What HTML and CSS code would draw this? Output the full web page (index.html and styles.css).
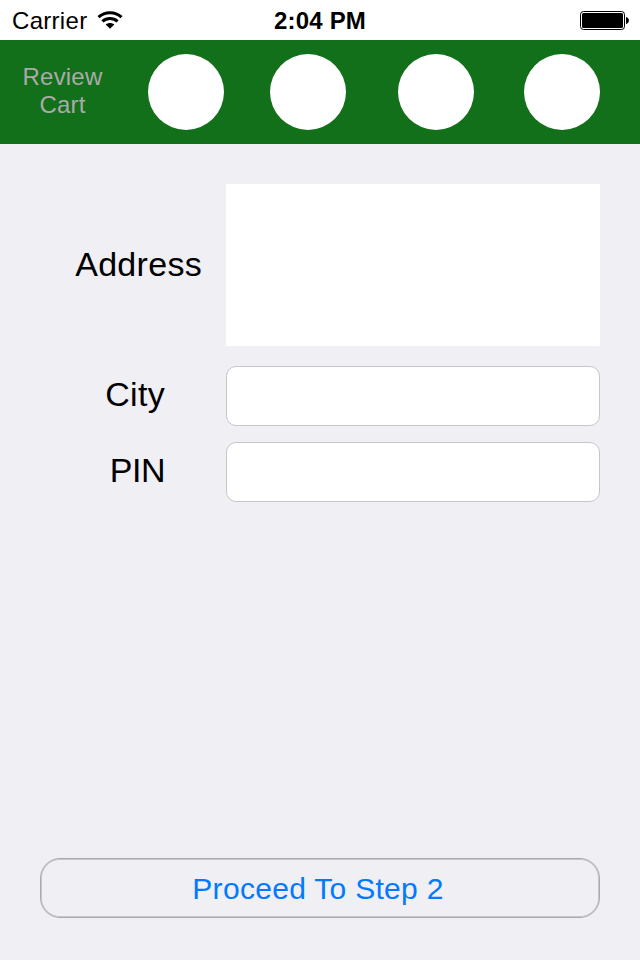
FILE: index.html
```html
<!DOCTYPE html>
<html lang="en">
<head>
<meta charset="utf-8">
<title>Checkout</title>
<link rel="stylesheet" href="styles.css">
</head>
<body>
<header class="status">
  <div class="carrier"><span>Carrier</span>
    <svg class="wifi" width="26" height="18" viewBox="0 0 26 18" fill="none" stroke="#000" stroke-width="3">
      <path d="M1.5 6.2C8 .1 18 .1 24.5 6.2"/>
      <path d="M5.4 10.3C9.7 6.4 16.3 6.4 20.6 10.3"/>
      <path d="M13 17.7L8.7 13.5C11.2 11.5 14.8 11.5 17.3 13.5Z" fill="#000" stroke="none"/>
    </svg>
  </div>
  <time class="clock">2:04 PM</time>
  <svg class="battery" width="49" height="20" viewBox="0 0 49 20">
    <rect x=".5" y=".5" width="44" height="18" rx="3" fill="none" stroke="#000"/>
    <rect x="2" y="2" width="41" height="15" rx="1.5"/>
    <path d="M46 6C49.8 6.8 49.8 12.2 46 13Z"/>
  </svg>
</header>
<nav class="steps">
  <span class="review">Review<br>Cart</span>
  <i class="step"></i><i class="step"></i><i class="step"></i><i class="step"></i>
</nav>
<main class="form">
  <div class="row row-address"><label for="address">Address</label><textarea id="address"></textarea></div>
  <div class="row"><label for="city">City</label><input id="city" type="text"></div>
  <div class="row row-pin"><label for="pin">PIN</label><input id="pin" type="text"></div>
  <button class="proceed" type="button">Proceed To Step 2</button>
</main>
</body>
</html>
```

FILE: styles.css
```css
* { box-sizing: border-box; }
body {
  margin: 0;
  height: 960px;
  display: flex;
  flex-direction: column;
  background: #efeff4;
  color: #000;
  font-family: "Liberation Sans", Arial, sans-serif;
}
.status {
  height: 40px;
  display: grid;
  grid-template-columns: 1fr auto 1fr;
  align-items: center;
  padding: 1px 11px 0;
  background: #fff;
  font-size: 24px;
  line-height: 39px;
  letter-spacing: 0.3px;
}
.carrier { display: flex; align-items: center; gap: 10px; padding-left: 1px; }
.wifi { margin-bottom: 1px; }
.clock { font-weight: 700; letter-spacing: 0.2px; }
.battery { justify-self: end; }
.steps {
  height: 104px;
  display: grid;
  grid-template-columns: 126px 122px 128px 126px 76px;
  align-items: center;
  padding: 0 40px 0 22px;
  background: #12701a;
}
.review {
  width: 81px;
  padding-bottom: 2px;
  color: #aaa;
  font-size: 24px;
  line-height: 28px;
  letter-spacing: 0.2px;
  text-align: center;
}
.step { width: 76px; height: 76px; border-radius: 50%; background: #fff; }
.form {
  flex: 1;
  display: flex;
  flex-direction: column;
  padding: 40px 40px 42px;
}
.row { display: flex; height: 60px; margin-bottom: 16px; }
.row-address { height: 162px; margin-bottom: 20px; }
.row label {
  width: 186px;
  padding-right: 61px;
  font-size: 34px;
  line-height: 56px;
  letter-spacing: 0.3px;
  text-align: right;
}
.row-address label { padding-right: 24px; line-height: 160px; }
.row-pin label { letter-spacing: -0.5px; }
.row input, .row textarea {
  flex: 1;
  min-width: 0;
  margin: 0;
  padding: 8px 14px;
  background: #fff;
  border: 1px solid #c6c6cb;
  border-radius: 10px;
  font: 28px "Liberation Sans", Arial, sans-serif;
}
.row textarea { border: 0; border-radius: 0; resize: none; }
.proceed {
  height: 60px;
  margin-top: auto;
  padding: 3px 4px 1px 0;
  background: transparent;
  border: 1px solid #ababad;
  border-radius: 20px;
  box-shadow: inset 0 0 0 1px #c6c6c9;
  color: #007aff;
  font: 30px "Liberation Sans", Arial, sans-serif;
  letter-spacing: 0.3px;
}
```
